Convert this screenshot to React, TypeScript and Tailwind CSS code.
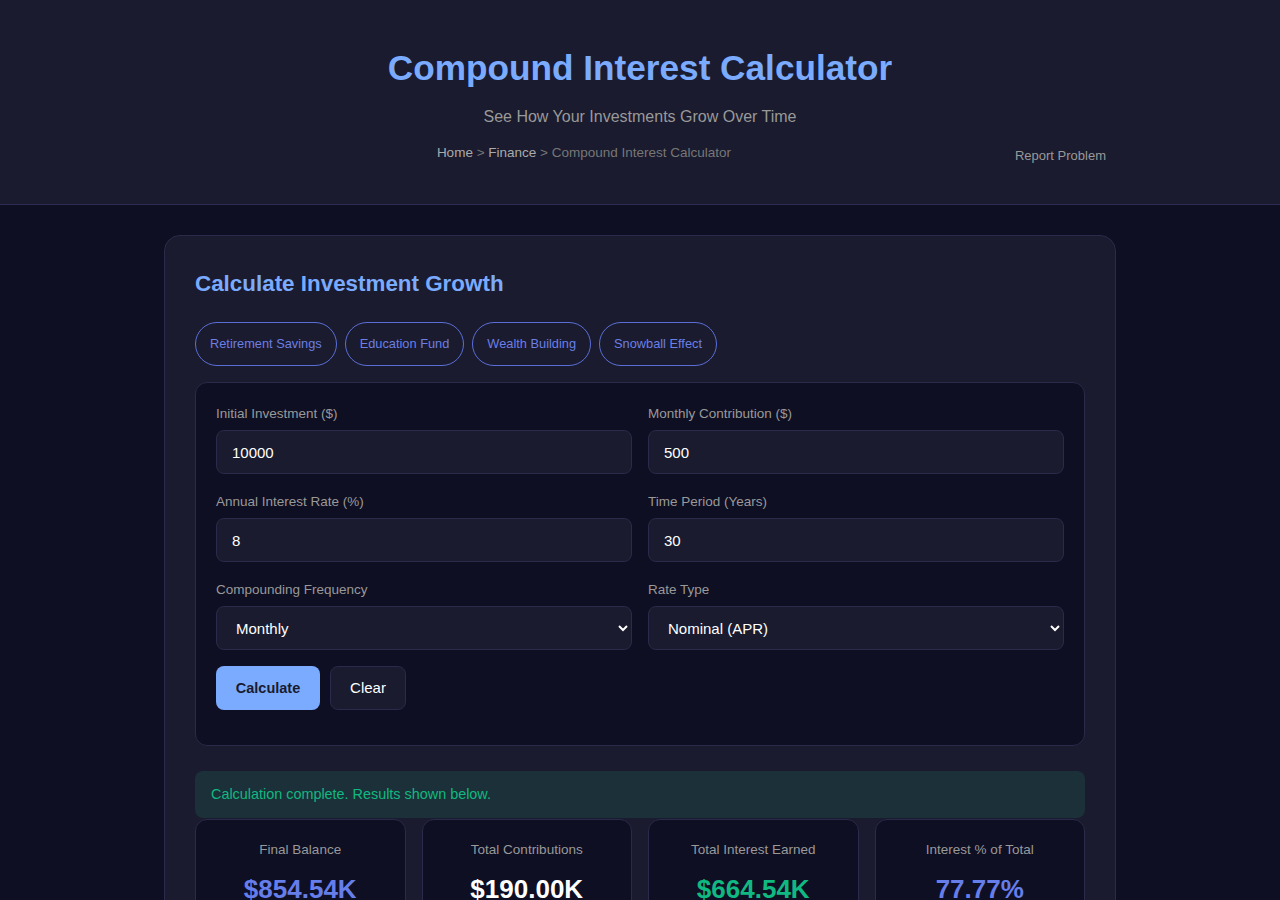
import React, { useState } from "react";

const presets = ["Retirement Savings", "Education Fund", "Wealth Building", "Snowball Effect"];

interface Result {
  label: string;
  value: string;
  color: string;
}

const results: Result[] = [
  { label: "Final Balance", value: "$854.54K", color: "text-[#667eea]" },
  { label: "Total Contributions", value: "$190.00K", color: "text-white" },
  { label: "Total Interest Earned", value: "$664.54K", color: "text-[#10b981]" },
  { label: "Interest % of Total", value: "77.77%", color: "text-[#667eea]" },
];

export default function App() {
  const [form, setForm] = useState({
    initial: "10000",
    monthly: "500",
    rate: "8",
    years: "30",
    freq: "monthly",
    rateType: "nominal",
  });

  const handleChange = (
    e: React.ChangeEvent<HTMLInputElement | HTMLSelectElement>
  ) => {
    const { name, value } = e.target;
    setForm((prev) => ({ ...prev, [name]: value }));
  };

  const inputCls =
    "w-full h-[44px] rounded-lg border border-[#2a2a4a] bg-[#1a1b2e] px-[15px] text-[15px] text-white outline-none";
  const labelCls = "block text-[13.5px] leading-[20px] text-[#999999] mb-[6px]";

  return (
    <div
      className="min-h-screen bg-[#0f0f23] text-white"
      style={{ fontFamily: '"Liberation Sans", Arial, sans-serif' }}
    >
      {/* Header */}
      <header className="h-[205px] bg-[#1a1b2e] border-b border-[#2d2d52]">
        <div className="max-w-[952px] mx-auto pt-[45px] text-center">
          <h1 className="text-[35.2px] leading-[46px] font-bold text-[#7aabff]">
            Compound Interest Calculator
          </h1>
          <p className="mt-[14px] text-[16px] leading-[24px] text-[#999999]">
            See How Your Investments Grow Over Time
          </p>
          <div className="mt-[15px] flex items-start">
            <nav className="flex-1 text-center text-[13.5px] leading-[18px] text-[#777777]">
              <span className="text-[#aaaaaa]">Home</span> &gt;{" "}
              <span className="text-[#aaaaaa]">Finance</span> &gt; Compound Interest Calculator
            </nav>
            <button className="mt-[3px] pl-[11px] pr-[10px] text-[13px] leading-[18px] text-[#999999]">
              Report Problem
            </button>
          </div>
        </div>
      </header>

      {/* Main card */}
      <main className="pt-[30px]">
        <div className="max-w-[952px] mx-auto rounded-2xl border border-[#2a2a4a] bg-[#1a1b2e] px-[30px] pt-[33px] pb-10">
          <h2 className="text-[22.4px] leading-[30px] font-bold text-[#7aabff]">
            Calculate Investment Growth
          </h2>

          <div className="mt-[23px] flex gap-2">
            {presets.map((p) => (
              <button
                key={p}
                className="h-[44px] px-[14px] rounded-full border border-[#5a6fd6] text-[12.8px] text-[#6b7fe6]"
              >
                {p}
              </button>
            ))}
          </div>

          {/* Form */}
          <div className="mt-4 rounded-xl border border-[#2a2a4a] bg-[#0f0f23] px-5 pt-[21px] pb-[35px]">
            <div className="grid grid-cols-2 gap-x-4 gap-y-[18px]">
              <div>
                <label className={labelCls}>Initial Investment ($)</label>
                <input name="initial" value={form.initial} onChange={handleChange} className={inputCls} />
              </div>
              <div>
                <label className={labelCls}>Monthly Contribution ($)</label>
                <input name="monthly" value={form.monthly} onChange={handleChange} className={inputCls} />
              </div>
              <div>
                <label className={labelCls}>Annual Interest Rate (%)</label>
                <input name="rate" value={form.rate} onChange={handleChange} className={inputCls} />
              </div>
              <div>
                <label className={labelCls}>Time Period (Years)</label>
                <input name="years" value={form.years} onChange={handleChange} className={inputCls} />
              </div>
              <div>
                <label className={labelCls}>Compounding Frequency</label>
                <select name="freq" value={form.freq} onChange={handleChange} className={inputCls}>
                  <option value="annually">Annually</option>
                  <option value="quarterly">Quarterly</option>
                  <option value="monthly">Monthly</option>
                  <option value="daily">Daily</option>
                </select>
              </div>
              <div>
                <label className={labelCls}>Rate Type</label>
                <select name="rateType" value={form.rateType} onChange={handleChange} className={inputCls}>
                  <option value="nominal">Nominal (APR)</option>
                  <option value="effective">Effective (APY)</option>
                </select>
              </div>
            </div>

            <div className="mt-4 flex gap-[10px]">
              <button className="h-[44px] w-[104px] rounded-lg bg-[#7aabff] pt-px text-[14.5px] font-bold text-[#1a1b2e]">
                Calculate
              </button>
              <button className="h-[44px] w-[76px] rounded-lg border border-[#2a2a4a] bg-[#1a1b2e] text-[15px] text-white">
                Clear
              </button>
            </div>
          </div>

          {/* Status */}
          <div className="mt-[25px] h-[47px] flex items-center rounded-lg bg-[#1b3038] px-4 text-[14.4px] text-[#10b981]">
            Calculation complete. Results shown below.
          </div>

          {/* Results */}
          <div className="mt-px grid grid-cols-4 gap-4">
            {results.map((r) => (
              <div
                key={r.label}
                className="rounded-xl border border-[#2a2a4a] bg-[#0f0f23] pt-[21px] pb-5 text-center"
              >
                <div className="text-[13.5px] leading-[18px] text-[#999999]">{r.label}</div>
                <div className={`mt-[14px] text-[26px] leading-[32px] font-bold ${r.color}`}>
                  {r.value}
                </div>
              </div>
            ))}
          </div>
        </div>
      </main>
    </div>
  );
}
